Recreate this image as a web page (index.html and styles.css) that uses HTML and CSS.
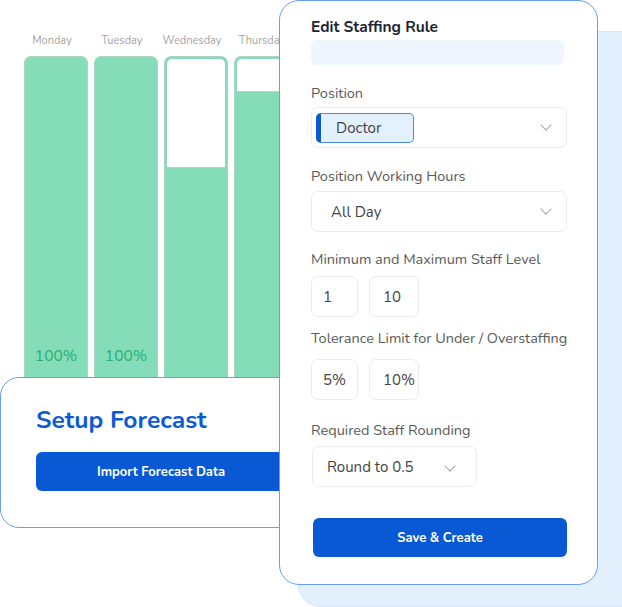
FILE: index.html
```html
<!DOCTYPE html>
<html>
<head>
<meta charset="utf-8">
<link rel="stylesheet" href="styles.css">
</head>
<body>
<div class="stage">
  <div class="chart">
    <div class="days">
      <span class="day">Monday</span>
      <span class="day">Tuesday</span>
      <span class="day">Wednesday</span>
      <span class="day">Thursday</span>
    </div>
    <div class="bars">
      <div class="bar"><div class="pct">100%</div></div>
      <div class="bar"><div class="pct">100%</div></div>
      <div class="bar"><div class="empty" style="height:109px"></div></div>
      <div class="bar"><div class="empty" style="height:33px"></div></div>
    </div>
  </div>

  <div class="setup">
    <h2 class="setup-title">Setup Forecast</h2>
    <div class="btn btn-import">Import Forecast Data</div>
  </div>

  <div class="backdrop"></div>

  <div class="modal">
    <h3 class="modal-title">Edit Staffing Rule</h3>
    <div class="placeholder"></div>

    <div class="label l-position">Position</div>
    <div class="select">
      <div class="chip">Doctor</div>
      <span class="chev"></span>
    </div>

    <div class="label l-hours">Position Working Hours</div>
    <div class="select">
      <span class="sel-text">All Day</span>
      <span class="chev"></span>
    </div>

    <div class="label l-minmax">Minimum and Maximum Staff Level</div>
    <div class="pair">
      <div class="box b1">1</div>
      <div class="box b2">10</div>
    </div>

    <div class="label l-tol">Tolerance Limit for Under / Overstaffing</div>
    <div class="pair">
      <div class="box b1">5%</div>
      <div class="box b2">10%</div>
    </div>

    <div class="label l-round">Required Staff Rounding</div>
    <div class="select select-small">
      <span class="sel-text">Round to 0.5</span>
      <span class="chev"></span>
    </div>

    <div class="btn btn-save">Save &amp; Create</div>
  </div>
</div>
</body>
</html>
```

FILE: styles.css
```css
* { box-sizing: border-box; }
html, body { margin: 0; padding: 0; background: #fff; }
body { font-family: "Nunito", Lato, "Noto Sans", sans-serif; }

.stage {
  position: relative;
  width: 622px;
  height: 607px;
  overflow: hidden;
  background: #fff;
}

/* chart */
.chart {
  position: absolute;
  left: 24px;
  top: 33px;
  width: 300px;
}
.days {
  display: flex;
  gap: 6px;
  height: 23px;
}
.day {
  width: 64px;
  flex: none;
  text-align: center;
  font-size: 11px;
  color: #a3a3a3;
  line-height: 16px;
  margin-left: -4px;
  margin-right: 4px;
  white-space: nowrap;
}
.bars {
  display: flex;
  gap: 6px;
}
.bar {
  width: 64px;
  height: 330px;
  flex: none;
  background: #85dcb9;
  border: 1px solid #a9d6c2;
  border-bottom: none;
  border-radius: 7px 7px 0 0;
  padding: 2px 2px 0;
  display: flex;
  flex-direction: column;
}
.empty {
  background: #fff;
  border-radius: 5px 5px 0 0;
  border-bottom: 1px solid #c9c9c9;
  flex: none;
}
.pct {
  margin-top: 287px;
  text-align: center;
  font-size: 15.5px;
  color: #27b072;
  line-height: 20px;
}

/* setup card */
.setup {
  position: absolute;
  left: 0;
  top: 377px;
  width: 330px;
  height: 151px;
  background: #fff;
  border: 1px solid #6b9ee6;
  border-radius: 19px;
  padding: 26px 0 0 34px;
}
.setup-title {
  margin: 0 0 0 1px;
  font-size: 24.6px;
  font-weight: 700;
  color: #0a5ad4;
  line-height: 32px;
}
.btn {
  background: #0959d5;
  color: #fff;
  font-weight: 700;
  font-size: 13px;
  border-radius: 6px;
  display: flex;
  align-items: center;
  justify-content: center;
}
.btn-import {
  margin-top: 16px;
  margin-left: 1px;
  width: 250px;
  height: 39px;
}

/* backdrop */
.backdrop {
  position: absolute;
  left: 298px;
  top: 31px;
  width: 360px;
  height: 576px;
  background: #e2effd;
  border: 1px solid #d8e7fb;
  border-radius: 22px;
}

/* modal */
.modal {
  position: absolute;
  left: 279px;
  top: 0;
  width: 319px;
  height: 585px;
  background: #fff;
  border: 1px solid #6a9de8;
  border-radius: 20px;
  padding: 15px 0 0 31px;
  display: flex;
  flex-direction: column;
  align-items: flex-start;
}
.modal-title {
  margin: 0;
  font-size: 15.5px;
  font-weight: 700;
  color: #1b2333;
  line-height: 22px;
}
.placeholder {
  margin-top: 2px;
  width: 253px;
  height: 25px;
  background: #eff6fe;
  border-radius: 6px;
}
.label {
  font-size: 14.5px;
  color: #595959;
  line-height: 20px;
  white-space: nowrap;
}
.l-position { margin-top: 18px; }
.l-hours { margin-top: 18px; }
.l-minmax { margin-top: 17px; }
.l-tol { margin-top: 11px; }
.l-round { margin-top: 20px; }

.select {
  margin-top: 4px;
  width: 256px;
  height: 41px;
  border: 1px solid #ececec;
  border-radius: 7px;
  display: flex;
  align-items: center;
  position: relative;
  padding-left: 19px;
}
.l-hours + .select { margin-top: 5px; }
.select-small {
  margin-top: 6px;
  margin-left: 1px;
  width: 165px;
  padding-left: 14px;
}
.chip {
  margin-left: -15px;
  width: 98px;
  height: 30px;
  background: #e3f0fd;
  border: 1px solid #4a8ae0;
  border-left: 5px solid #0959d5;
  border-radius: 5px;
  display: flex;
  align-items: center;
  padding-left: 15px;
  font-size: 15px;
  color: #444;
}
.sel-text {
  font-size: 15px;
  color: #444;
}
.chev {
  position: absolute;
  right: 16px;
  top: 13px;
  width: 8px;
  height: 8px;
  border-right: 1.3px solid #a6a6a6;
  border-bottom: 1.3px solid #a6a6a6;
  transform: rotate(45deg);
}
.select-small .chev { right: 22px; top: 15px; }

.pair {
  display: flex;
  gap: 11px;
  margin-top: 7px;
}
.l-tol + .pair { margin-top: 11px; }
.box {
  height: 41px;
  border: 1px solid #ececec;
  border-radius: 7px;
  display: flex;
  align-items: center;
  font-size: 15px;
  color: #444;
  padding-left: 11px;
}
.box.b1 { width: 47px; }
.box.b2 { width: 50px; padding-left: 13px; }

.btn-save {
  margin-top: 31px;
  margin-left: 2px;
  width: 254px;
  height: 39px;
}
```
